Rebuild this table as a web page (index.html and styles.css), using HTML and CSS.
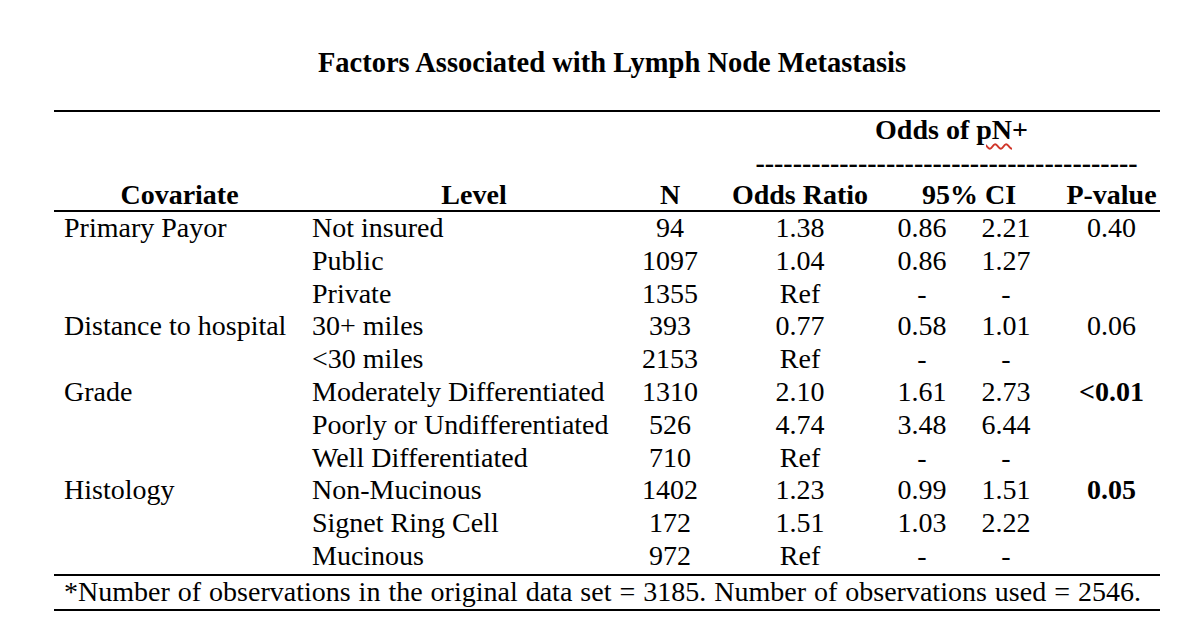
FILE: index.html
```html
<!DOCTYPE html>
<html lang="en">
<head>
<meta charset="utf-8">
<title>Factors Associated with Lymph Node Metastasis</title>
<link rel="stylesheet" href="styles.css">
</head>
<body>
<div class="page">
  <h1 class="title">Factors Associated with Lymph Node Metastasis</h1>
  <table class="stats">
    <colgroup>
      <col class="c-cov">
      <col class="c-lvl">
      <col class="c-n">
      <col class="c-or">
      <col class="c-lo">
      <col class="c-hi">
      <col class="c-p">
    </colgroup>
    <thead>
      <tr class="top">
        <th></th><th></th><th></th>
        <th colspan="4" class="group">Odds of <span class="spell">pN</span>+</th>
      </tr>
      <tr class="dash-row">
        <th></th><th></th><th></th>
        <th colspan="4" class="dashes">-----------------------------------------</th>
      </tr>
      <tr class="head">
        <th class="ctr">Covariate</th>
        <th class="ctr lvl-h">Level</th>
        <th class="ctr">N</th>
        <th class="ctr">Odds Ratio</th>
        <th colspan="2" class="ctr">95% CI</th>
        <th class="ctr pcol">P-value</th>
      </tr>
    </thead>
    <tbody>
      <tr><td class="cov">Primary Payor</td><td class="lvl">Not insured</td><td class="num">94</td><td class="num">1.38</td><td class="num">0.86</td><td class="num">2.21</td><td class="num pcol">0.40</td></tr>
      <tr><td class="cov"></td><td class="lvl">Public</td><td class="num">1097</td><td class="num">1.04</td><td class="num">0.86</td><td class="num">1.27</td><td class="num pcol"></td></tr>
      <tr><td class="cov"></td><td class="lvl">Private</td><td class="num">1355</td><td class="num">Ref</td><td class="num">-</td><td class="num">-</td><td class="num pcol"></td></tr>
      <tr><td class="cov">Distance to hospital</td><td class="lvl">30+ miles</td><td class="num">393</td><td class="num">0.77</td><td class="num">0.58</td><td class="num">1.01</td><td class="num pcol">0.06</td></tr>
      <tr><td class="cov"></td><td class="lvl">&lt;30 miles</td><td class="num">2153</td><td class="num">Ref</td><td class="num">-</td><td class="num">-</td><td class="num pcol"></td></tr>
      <tr><td class="cov">Grade</td><td class="lvl">Moderately Differentiated</td><td class="num">1310</td><td class="num">2.10</td><td class="num">1.61</td><td class="num">2.73</td><td class="num pcol"><b>&lt;0.01</b></td></tr>
      <tr><td class="cov"></td><td class="lvl">Poorly or Undifferentiated</td><td class="num">526</td><td class="num">4.74</td><td class="num">3.48</td><td class="num">6.44</td><td class="num pcol"></td></tr>
      <tr><td class="cov"></td><td class="lvl">Well Differentiated</td><td class="num">710</td><td class="num">Ref</td><td class="num">-</td><td class="num">-</td><td class="num pcol"></td></tr>
      <tr><td class="cov">Histology</td><td class="lvl">Non-Mucinous</td><td class="num">1402</td><td class="num">1.23</td><td class="num">0.99</td><td class="num">1.51</td><td class="num pcol"><b>0.05</b></td></tr>
      <tr><td class="cov"></td><td class="lvl">Signet Ring Cell</td><td class="num">172</td><td class="num">1.51</td><td class="num">1.03</td><td class="num">2.22</td><td class="num pcol"></td></tr>
      <tr class="last"><td class="cov"></td><td class="lvl">Mucinous</td><td class="num">972</td><td class="num">Ref</td><td class="num">-</td><td class="num">-</td><td class="num pcol"></td></tr>
    </tbody>
    <tfoot>
      <tr><td colspan="7" class="note">*Number of observations in the original data set = 3185. Number of observations used = 2546.</td></tr>
    </tfoot>
  </table>
</div>
</body>
</html>
```

FILE: styles.css
```css
html, body {
  margin: 0;
  padding: 0;
  background: #ffffff;
}

body {
  font-family: "Liberation Serif", "Times New Roman", Times, serif;
  font-size: 28px;
  color: #000000;
}

.page {
  padding: 47px 43px 0 54px;
}

.title {
  margin: 0 0 31px 0;
  width: 1106px;
  padding-left: 10px;
  box-sizing: border-box;
  text-align: center;
  font-size: 28.5px;
  font-weight: bold;
  line-height: 32px;
}

.stats {
  width: 1106px;
  table-layout: fixed;
  border-collapse: collapse;
  border-top: 2px solid #000;
}

.c-cov { width: 251px; }
.c-lvl { width: 320px; }
.c-n   { width: 90px; }
.c-or  { width: 170px; }
.c-lo  { width: 74px; }
.c-hi  { width: 94px; }
.c-p   { width: 107px; }

.stats th,
.stats td {
  padding: 0;
  line-height: 32.8px;
  height: 32.8px;
  white-space: nowrap;
  vertical-align: middle;
}

.stats th {
  font-weight: bold;
}

.top th {
  height: 35px;
  line-height: 35px;
}

.dash-row th {
  height: 32px;
  line-height: 32px;
}

.head th {
  height: 31px;
  line-height: 31px;
  border-bottom: 2px solid #000;
}

.last td {
  height: 34px;
  vertical-align: top;
}

.group {
  text-align: center;
  padding-left: 28px !important;
}

.spell {
  text-decoration: underline wavy #d0362a;
  text-decoration-thickness: 1.5px;
  text-underline-offset: 4px;
}

.dashes {
  text-align: center;
  padding-left: 18px !important;
}

.ctr { text-align: center; }

.lvl-h { padding-left: 18px !important; }

.pcol { padding-left: 10px !important; }

.cov {
  text-align: left;
  padding-left: 10px !important;
}

.lvl {
  text-align: left;
  padding-left: 7px !important;
}

.num { text-align: center; }

.note {
  text-align: left;
  padding-left: 10px !important;
  word-spacing: 1px;
  border-top: 2px solid #000;
  border-bottom: 2px solid #000;
}
```
